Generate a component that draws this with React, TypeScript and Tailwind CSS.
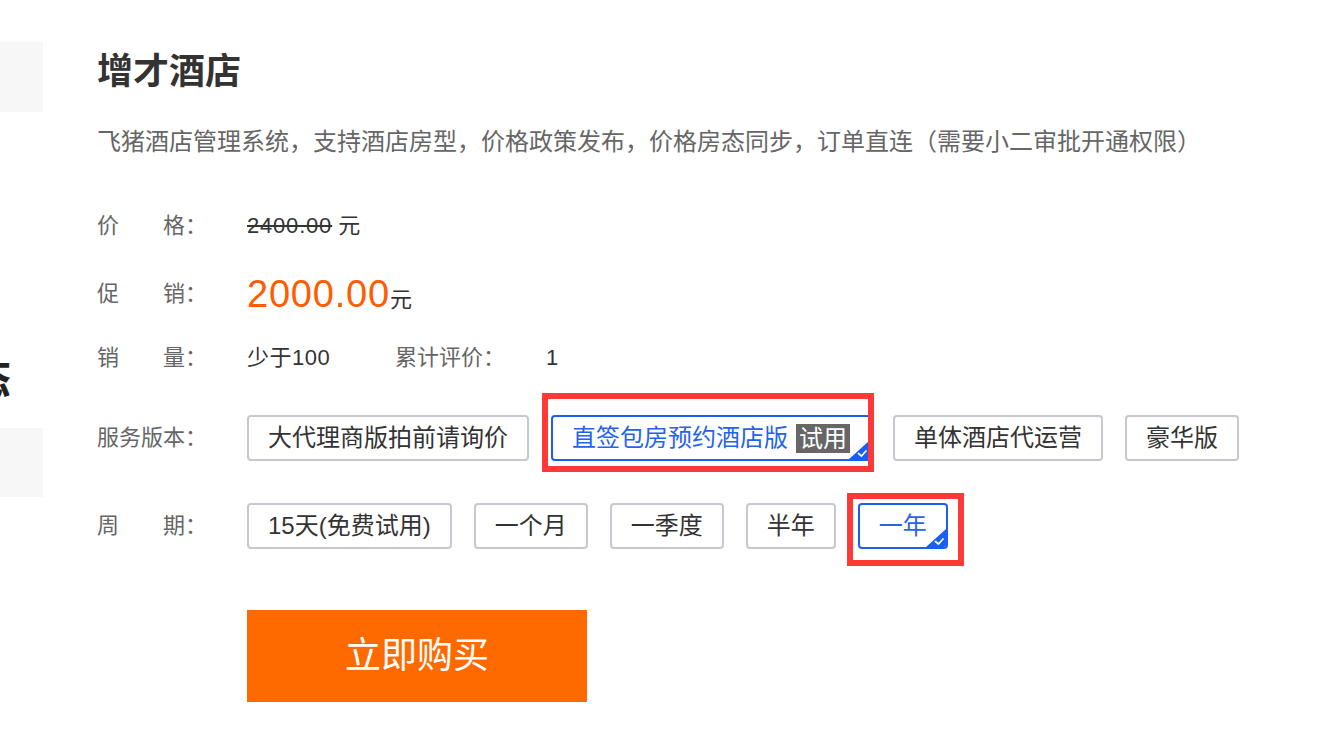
const FONT = "font-['Liberation_Sans','Noto_Sans_CJK_SC',sans-serif]";

type Opt = { label: string; tag?: string };

const VERSIONS: Opt[] = [
  { label: "大代理商版拍前请询价" },
  { label: "直签包房预约酒店版", tag: "试用" },
  { label: "单体酒店代运营" },
  { label: "豪华版" },
];

const PERIODS: Opt[] = [
  { label: "15天(免费试用)" },
  { label: "一个月" },
  { label: "一季度" },
  { label: "半年" },
  { label: "一年" },
];

function Corner() {
  return (
    <svg
      className="absolute bottom-0 right-0"
      width="20"
      height="18"
      viewBox="0 0 20 18"
    >
      <polygon points="20,0 20,18 0,18" fill="#1a5ef5" />
      <path
        d="M9.5 12.5 L12.5 15 L17 10"
        stroke="#fff"
        strokeWidth="1.8"
        fill="none"
        strokeLinecap="round"
        strokeLinejoin="round"
      />
    </svg>
  );
}

function OptButton({ opt, active }: { opt: Opt; active: boolean }) {
  return (
    <button
      type="button"
      className={
        "relative flex h-[46px] items-center overflow-hidden rounded-[4px] border-2 px-[19px] text-[24px] leading-none " +
        (active
          ? "border-[#1a5ef5] text-[#2563eb]"
          : "border-[#c7c8cf] text-[#333]")
      }
    >
      <span>{opt.label}</span>
      {opt.tag ? (
        <span className="ml-[8px] bg-[#666] px-[3px] py-[2px] text-[24px] leading-[25px] text-white">
          {opt.tag}
        </span>
      ) : null}
      {active ? <Corner /> : null}
    </button>
  );
}

function Row({
  label,
  className,
  children,
}: {
  label: string;
  className?: string;
  children: React.ReactNode;
}) {
  return (
    <div className={"flex items-center " + (className ?? "")}>
      <span className="w-[150px] shrink-0 text-[22px] leading-none text-[#666]">
        {label}
      </span>
      {children}
    </div>
  );
}

export default function App() {
  return (
    <div className={"flex min-h-screen bg-white " + FONT}>
      {/* thumbnail strip, cut off at the left edge */}
      <div className="flex w-[43px] shrink-0 flex-col pt-[42px]">
        <div className="h-[70px] bg-[#f7f7f7]" />
        <div className="mt-[238px] flex h-[60px] w-[11px] items-center justify-end overflow-hidden">
          <span className="text-[44px] font-bold leading-none text-[#222]">态</span>
        </div>
        <div className="mt-[18px] h-[69px] bg-[#f7f7f7]" />
      </div>

      <div className="ml-[54px] flex flex-col pt-[54px]">
        <h1 className="text-[36px] font-bold leading-[36px] text-[#333]">增才酒店</h1>
        <p className="mt-[40px] text-[24px] leading-[24px] text-[#666]">
          飞猪酒店管理系统，支持酒店房型，价格政策发布，价格房态同步，订单直连（需要小二审批开通权限）
        </p>

        <Row label="价　　格：" className="mt-[52px] h-[40px]">
          <span className="text-[22px] leading-none text-[#333]">
            <span className="line-through tracking-[0.8px]">2400.00</span> 元
          </span>
        </Row>

        <Row label="促　　销：" className="mt-[24px] h-[48px]">
          <span className="flex items-baseline text-[#333]">
            <span className="text-[38px] leading-none tracking-[0.8px] text-[#ff5c00]">2000.00</span>
            <span className="text-[22px] leading-none">元</span>
          </span>
        </Row>

        <Row label="销　　量：" className="mt-[20px] h-[40px]">
          <span className="w-[148px] text-[22px] leading-none tracking-[0.5px] text-[#333]">少于100</span>
          <span className="w-[151px] text-[22px] leading-none text-[#666]">累计评价：</span>
          <span className="text-[22px] leading-none text-[#333]">1</span>
        </Row>

        <Row label="服务版本：" className="mt-[37px]">
          <div className="flex gap-[22px]">
            {VERSIONS.map((v, i) => (
              <div key={v.label} className="relative">
                <OptButton opt={v} active={i === 1} />
                {i === 1 ? (
                  <div className="pointer-events-none absolute -bottom-[11px] -left-[9px] -right-[3px] -top-[22px] border-[6px] border-[#ff3838]" />
                ) : null}
              </div>
            ))}
          </div>
        </Row>

        <Row label="周　　期：" className="mt-[42px]">
          <div className="flex gap-[22px]">
            {PERIODS.map((p, i) => (
              <div key={p.label} className="relative">
                <OptButton opt={p} active={i === 4} />
                {i === 4 ? (
                  <div className="pointer-events-none absolute -bottom-[17px] -left-[11px] -right-[16px] -top-[10px] border-[6px] border-[#ff3838]" />
                ) : null}
              </div>
            ))}
          </div>
        </Row>

        <div className="mt-[61px] pl-[150px]">
          <button
            type="button"
            className="flex h-[92px] w-[340px] items-center justify-center bg-[#ff6a00] text-[36px] leading-none text-white"
          >
            立即购买
          </button>
        </div>
      </div>
    </div>
  );
}
